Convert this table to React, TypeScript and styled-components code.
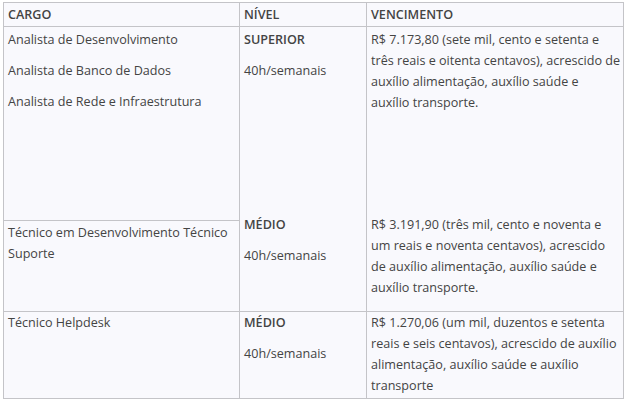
import React from "react";
import styled, { createGlobalStyle } from "styled-components";

const Global = createGlobalStyle`
  html, body { margin: 0; padding: 0; background: #ffffff; }
  body { font-family: "Open Sans", "DejaVu Sans", sans-serif; }
`;

const Page = styled.div`
  padding: 2px 0 0 3px;
`;

const Table = styled.div`
  display: grid;
  grid-template-columns: 236px 127px 257px;
  grid-template-rows: 24px 194px 91px 87px;
  width: 620px;
  border-top: 1px solid #c4c4c8;
  border-left: 1px solid #c4c4c8;
  background: #f9f9fd;
  color: #444444;
  font-size: 12.6px;
  line-height: 21px;
`;

const Cell = styled.div<{ $span?: number; $pt?: number }>`
  box-sizing: border-box;
  border-right: 1px solid #c4c4c8;
  border-bottom: 1px solid #c4c4c8;
  padding: ${(p) => p.$pt ?? 1}px 1px 0 4px;
  grid-row: ${(p) => (p.$span ? `span ${p.$span}` : "auto")};
  overflow: hidden;
`;

const Head = styled(Cell)`
  font-weight: 600;
  padding-top: 1px;
`;

const Para = styled.p`
  margin: 0 0 10px 0;
`;

const Level = styled.p`
  margin: 0 0 10px 0;
  font-weight: 600;
`;

const Text = styled.p`
  margin: 0;
`;

const Keep = styled.span`
  white-space: nowrap;
`;

const Block = styled.div<{ $h?: number }>`
  height: ${(p) => (p.$h ? `${p.$h}px` : "auto")};
`;

export default function App() {
  return (
    <>
      <Global />
      <Page>
        <Table>
          <Head>CARGO</Head>
          <Head>NÍVEL</Head>
          <Head>VENCIMENTO</Head>

          <Cell $pt={2}>
            <Para>Analista de Desenvolvimento</Para>
            <Para>Analista de Banco de Dados</Para>
            <Para>Analista de Rede e Infraestrutura</Para>
          </Cell>
          <Cell $span={2} $pt={2}>
            <Block $h={185}>
              <Level>SUPERIOR</Level>
              <Para>40h/semanais</Para>
            </Block>
            <Block>
              <Level>MÉDIO</Level>
              <Para>40h/semanais</Para>
            </Block>
          </Cell>
          <Cell $span={2} $pt={2}>
            <Block $h={185}>
              <Text>
                R$ 7.173,80 (sete mil, cento e setenta e três reais e oitenta
                centavos), acrescido de auxílio alimentação, auxílio saúde e{" "}
                <Keep>auxílio transporte.</Keep>
              </Text>
            </Block>
            <Block>
              <Text>
                R$ 3.191,90 (três mil, cento e noventa e um reais e noventa
                centavos), acrescido de auxílio alimentação, auxílio saúde e
                auxílio transporte.
              </Text>
            </Block>
          </Cell>

          <Cell $pt={1}>
            <Text>Técnico em Desenvolvimento Técnico Suporte</Text>
          </Cell>

          <Cell $pt={0}>
            <Text>Técnico Helpdesk</Text>
          </Cell>
          <Cell $pt={0}>
            <Level>MÉDIO</Level>
            <Para>40h/semanais</Para>
          </Cell>
          <Cell $pt={0}>
            <Text>
              R$ 1.270,06 (um mil, duzentos e setenta reais e seis centavos),
              acrescido de auxílio alimentação, auxílio saúde e auxílio
              transporte
            </Text>
          </Cell>
        </Table>
      </Page>
    </>
  );
}
